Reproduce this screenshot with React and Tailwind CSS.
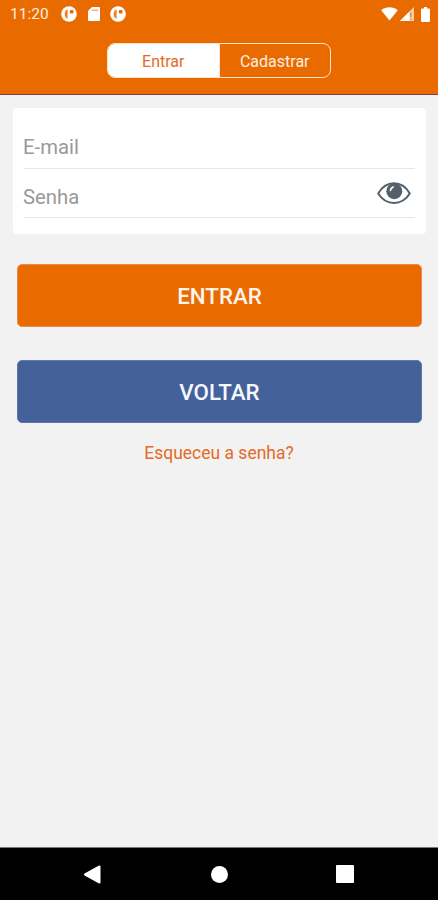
import { useState } from 'react';

function AppBadge() {
  return (
    <svg className="size-4" viewBox="0 0 16 16">
      <circle cx="8" cy="8" r="7.8" fill="#fff" />
      <path d="M6.6 3.6C4.6 4 3.7 5.600 3.700 8s.9 4.200 2.900 4.700z" fill="#e96b00" opacity=".85" />
      <rect x="8.800" y="3.900" width="3.700" height="3.600" rx="1.100" fill="#e96b00" />
    </svg>
  );
}

function StatusBar() {
  return (
    <div className="flex h-7 items-center pl-[10px] pr-2 text-[#ffeee0]">
      <span className="w-[51px] pt-[2px] text-[15.5px] leading-none">11:20</span>
      <AppBadge />
      <svg className="ml-[11px] h-[14px] w-3" viewBox="0 0 12 14">
        <path d="M4 0h7a1 1 0 0 1 1 1v12a1 1 0 0 1-1 1H1a1 1 0 0 1-1-1V4z" fill="#fff" />
        <path d="M4.200 3.200h6" stroke="#e96b00" strokeWidth="1.600" strokeDasharray="1.500 .6" opacity=".75" />
      </svg>
      <span className="ml-[10px]">
        <AppBadge />
      </span>
      <svg className="ml-auto h-[14px] w-[17px]" viewBox="0 0 17 14">
        <path d="M8.500 13.500.2 3.200C5-.6 12-.6 16.800 3.200z" fill="#fff" />
      </svg>
      <svg className="ml-[2px] h-[14px] w-[14px]" viewBox="0 0 15 15">
        <path d="M0 15 15 0v15z" fill="#fff" opacity=".7" />
        <path d="M0 15 10 5v10z" fill="#fff" />
        <path d="M11.700 6v5M11.700 12.500V14" stroke="#e96b00" strokeWidth="1.200" />
      </svg>
      <svg className="ml-[7px] h-[15px] w-[9px]" viewBox="0 0 9 15">
        <path d="M3 0h3v1.500h2a1 1 0 0 1 1 1V14a1 1 0 0 1-1 1H1a1 1 0 0 1-1-1V2.500a1 1 0 0 1 1-1h2z" fill="#fff" />
      </svg>
    </div>
  );
}

function EyeIcon() {
  return (
    <svg className="h-[24px] w-[34px]" viewBox="0 0 34 24">
      <path d="M1.200 12.500C9-1.100 25-1.100 32.800 12.500 25 25.100 9 25.100 1.200 12.500z" fill="#fff" stroke="#536069" strokeWidth="2" strokeLinejoin="round" />
      <circle cx="17.300" cy="10.200" r="8" fill="#536069" />
      <path d="M12.700 10.300c-.2-2.700 1.500-4.900 4.300-5.200l-.5 1.800c-1.500.4-2.200 1.500-2.300 3.100z" fill="#fff" />
    </svg>
  );
}

function NavBar() {
  return (
    <nav className="flex h-[53px] items-center justify-between border-t border-[#777] bg-black pl-[83px] pr-[84px]">
      <button aria-label="Back">
        <svg className="block h-[19px] w-[18px]" viewBox="0 0 18 19">
          <path d="M16.500 1.500v16L2 9.500z" fill="#fff" stroke="#fff" strokeWidth="2" strokeLinejoin="round" />
        </svg>
      </button>
      <button aria-label="Home" className="ml-px size-[17px] rounded-full bg-white" />
      <button aria-label="Recent" className="size-[18px] rounded-[1px] bg-white" />
    </nav>
  );
}

export default function App() {
  const [tab, setTab] = useState('entrar');
  const [email, setEmail] = useState('');
  const [senha, setSenha] = useState('');
  const [visible, setVisible] = useState(false);

  const tabClass = (name) =>
    `flex-1 pt-[3px] text-[16px] leading-none ${tab === name ? 'bg-white text-[#e56a25]' : 'text-[#ffeee0]'}`;

  return (
    <div className="flex h-[900px] w-[438px] flex-col bg-[#f2f2f2] font-[Roboto,sans-serif]">
      <header className="h-[95px] border-b border-[#7d3f4c] bg-[#e96b00]">
        <StatusBar />
        <div className="mx-auto mt-[15px] flex h-[35px] w-[224px] divide-x divide-[#ffe3d0] overflow-hidden rounded-[8px] border border-[#ffe3d0]">
          <button className={tabClass('entrar')} onClick={() => setTab('entrar')}>Entrar</button>
          <button className={tabClass('cadastrar')} onClick={() => setTab('cadastrar')}>Cadastrar</button>
        </div>
      </header>

      <main className="flex flex-1 flex-col border-t-2 border-[#f9edf5]">
        <div className="mt-[11px] mr-3 ml-[13px] h-[126px] rounded-[4px] bg-white px-[11px] pt-[17px]">
          <div className="h-[44px] border-b border-[#e6e6e6]">
            <input
              type="email"
              value={email}
              onChange={(e) => setEmail(e.target.value)}
              className="-ml-px h-[43px] w-full text-[20.3px] text-[#444] outline-none placeholder:text-[#999]"
              placeholder="E-mail"
            />
          </div>
          <div className="flex h-[49px] items-center border-b border-[#e6e6e6]">
            <input
              type={visible ? 'text' : 'password'}
              value={senha}
              onChange={(e) => setSenha(e.target.value)}
              className="-ml-px h-[40px] min-w-0 flex-1 pt-[8px] text-[20.3px] text-[#444] outline-none placeholder:text-[#999]"
              placeholder="Senha"
            />
            <button aria-label="Mostrar senha" className="mr-1" onClick={() => setVisible(!visible)}>
              <EyeIcon />
            </button>
          </div>
        </div>

        <div className="mt-[30px] flex flex-col gap-[33px] pr-4 pl-[17px]">
          <button className="h-[63px] rounded-[5px] border border-[#ee8a4d] bg-[#e96b00] pt-[3px] text-[22.3px] font-medium text-[#fff4ec]">
            ENTRAR
          </button>
          <button className="h-[63px] rounded-[5px] border border-[#6177ac] bg-[#456199] pt-[3px] text-[22.3px] font-medium text-[#f4f8ff]">
            VOLTAR
          </button>
        </div>

        <a href="#" className="mt-[18px] self-center text-[17.5px] leading-6 text-[#e56a25]">
          Esqueceu a senha?
        </a>
      </main>

      <NavBar />
    </div>
  );
}
